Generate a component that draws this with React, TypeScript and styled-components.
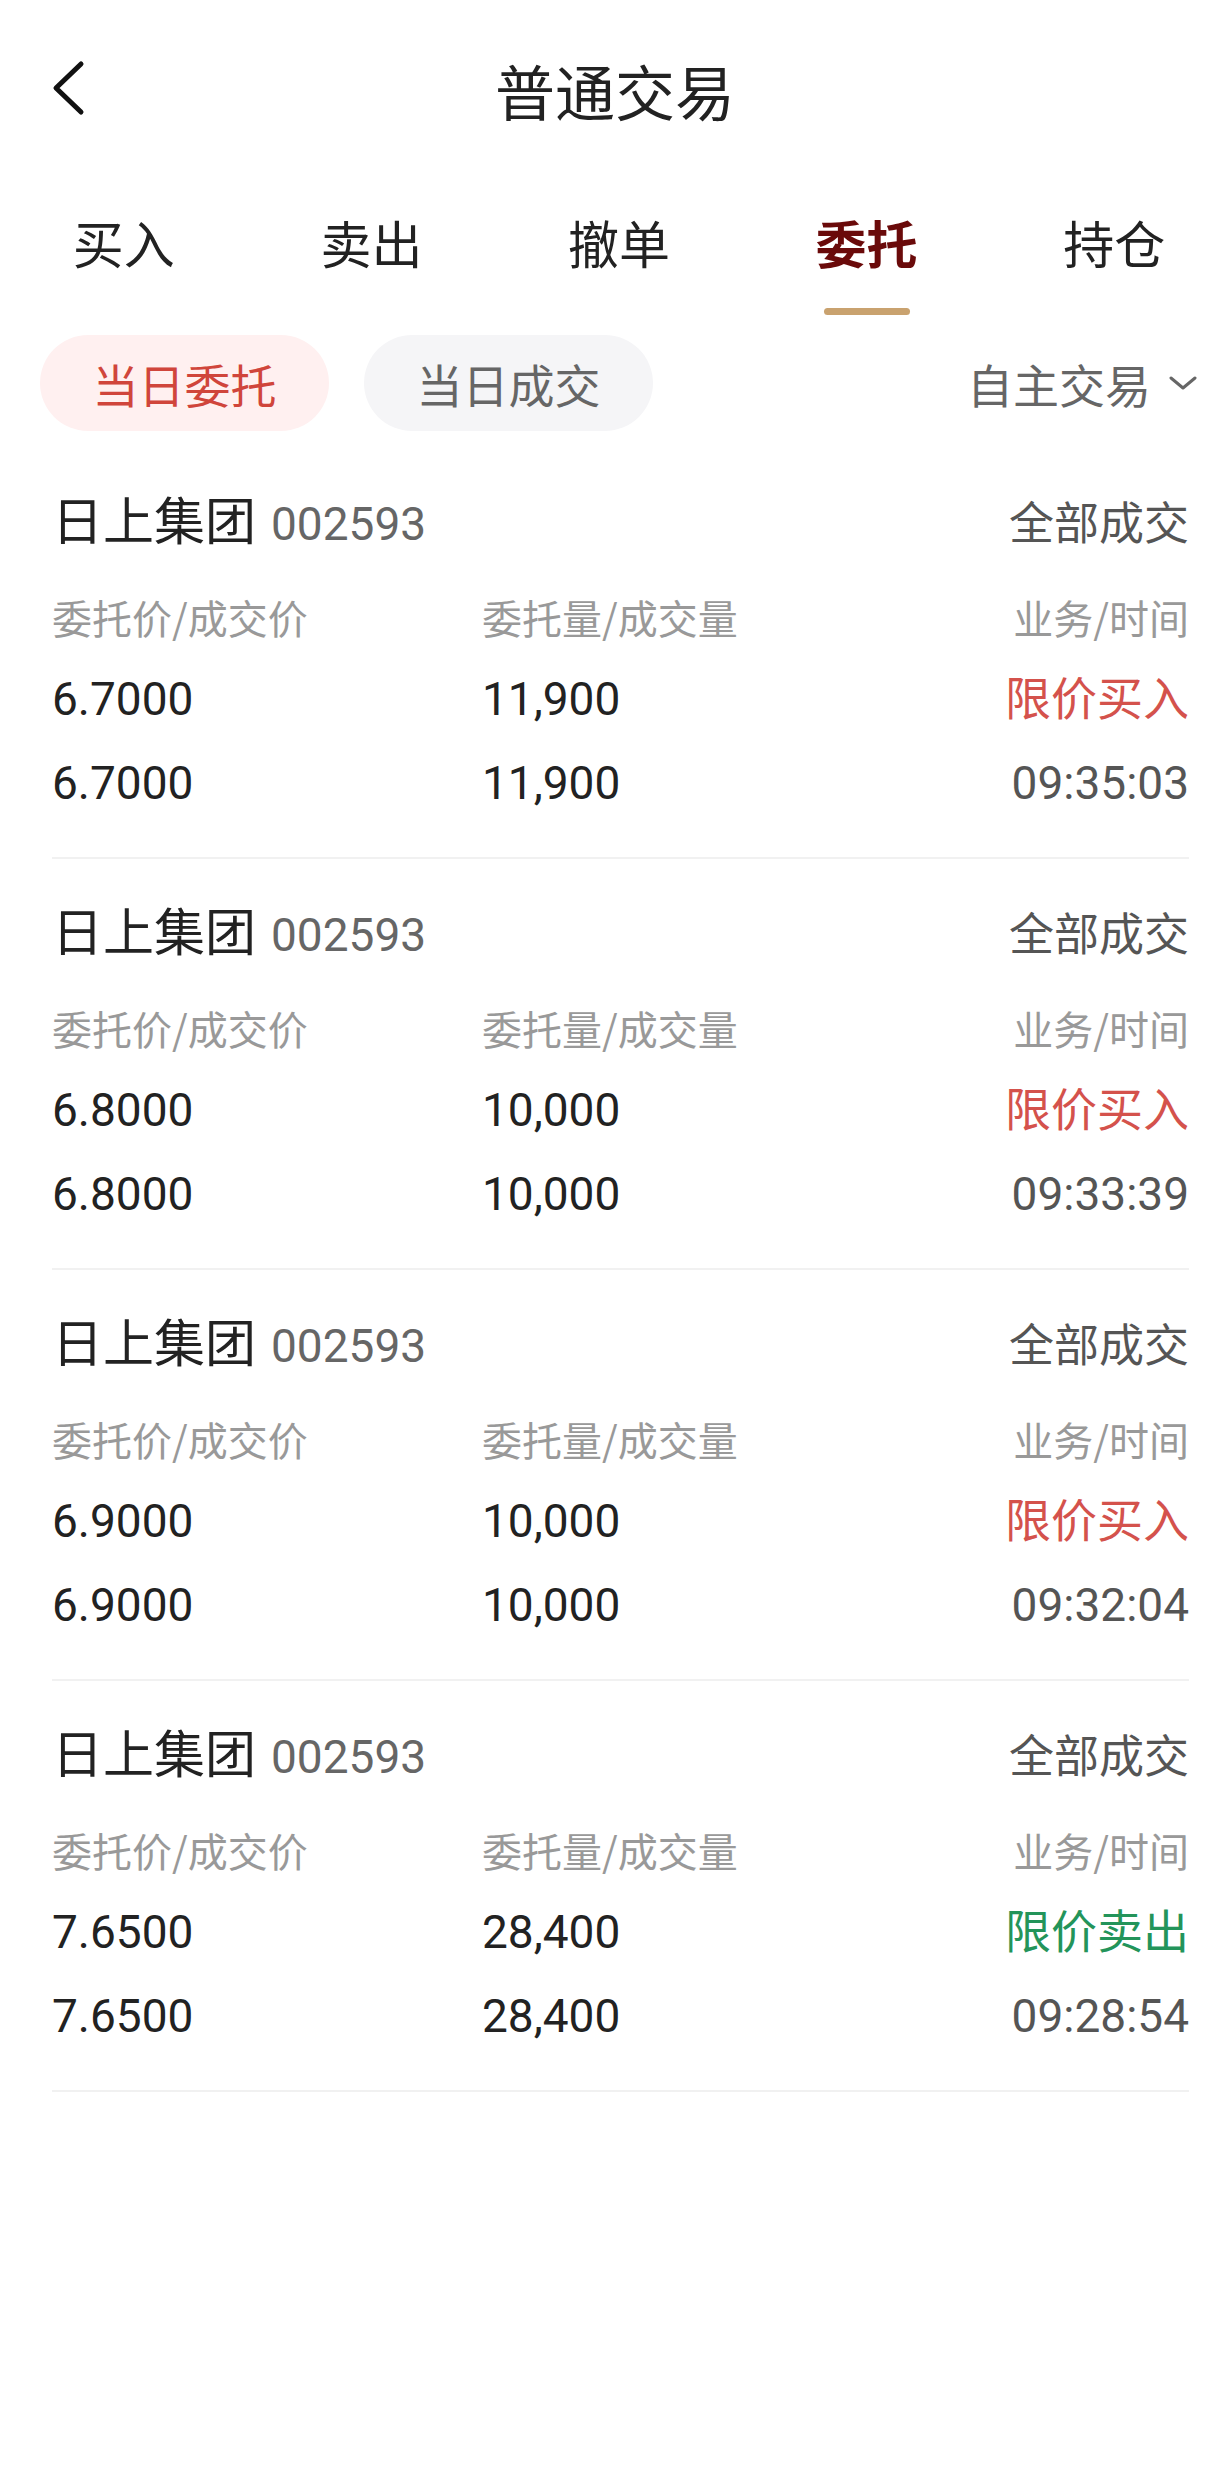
import React from "react";
import styled, { createGlobalStyle } from "styled-components";

const GlobalStyle = createGlobalStyle`
  html, body {
    margin: 0;
    padding: 0;
    background: #ffffff;
  }
  body {
    font-family: Roboto, "Noto Sans CJK SC", "Noto Sans", sans-serif;
    color: #222222;
  }
  * { box-sizing: border-box; }
`;

const Page = styled.div`
  width: 1230px;
  min-height: 2480px;
  background: #ffffff;
  font-family: Roboto, "Noto Sans CJK SC", sans-serif;
`;

const Header = styled.header`
  height: 180px;
  display: grid;
  grid-template-columns: 1fr auto 1fr;
  align-items: center;
`;

const BackButton = styled.button`
  justify-self: start;
  display: flex;
  align-items: center;
  margin: 0 0 4px 46px;
  padding: 0;
  border: none;
  background: transparent;
  width: 44px;
  height: 60px;
`;

const Title = styled.h1`
  margin: 0;
  font-size: 60px;
  line-height: 80px;
  font-weight: 400;
  color: #222222;
  font-family: "Noto Sans CJK SC", sans-serif;
`;

const Tabs = styled.nav`
  display: grid;
  grid-template-columns: repeat(5, 247.6px);
  overflow: hidden;
`;

const Tab = styled.div<{ $active?: boolean }>`
  display: flex;
  flex-direction: column;
  align-items: center;
  padding-top: 32px;
  font-family: "Noto Sans CJK SC", sans-serif;
  font-size: 51px;
  line-height: 60px;
  font-weight: ${(p) => (p.$active ? 700 : 400)};
  color: ${(p) => (p.$active ? "#6a0a0a" : "#222222")};
`;

const TabIndicator = styled.span<{ $active?: boolean }>`
  display: block;
  margin-top: 36px;
  width: 86px;
  height: 7px;
  border-radius: 4px;
  background: ${(p) => (p.$active ? "#c9a26f" : "transparent")};
`;

const FilterRow = styled.div`
  display: flex;
  align-items: center;
  gap: 35px;
  margin-top: 20px;
  padding: 0 33px 0 40px;
  height: 96px;
`;

const Chip = styled.div<{ $active?: boolean }>`
  width: 289px;
  height: 96px;
  border-radius: 48px;
  display: flex;
  align-items: center;
  justify-content: center;
  font-family: "Noto Sans CJK SC", sans-serif;
  font-size: 46px;
  background: ${(p) => (p.$active ? "#fff0f0" : "#f5f5f7")};
  color: ${(p) => (p.$active ? "#d0453b" : "#666666")};
`;

const Dropdown = styled.div`
  margin-left: auto;
  display: flex;
  align-items: center;
  gap: 18px;
  font-family: "Noto Sans CJK SC", sans-serif;
  font-size: 46px;
  color: #666666;
`;

const List = styled.div`
  margin-top: 17px;
  padding: 0 41px 0 52px;
`;

const Card = styled.div`
  padding: 40px 0 44px;
  border-bottom: 2px solid #f1f1f1;
`;

const CardHead = styled.div`
  display: flex;
  align-items: baseline;
  height: 60px;
  line-height: 60px;
`;

const StockName = styled.span`
  font-family: "Noto Sans CJK SC", sans-serif;
  font-size: 51px;
  color: #222222;
`;

const StockCode = styled.span`
  margin-left: 15px;
  font-family: Roboto, sans-serif;
  font-size: 46px;
  color: #666666;
`;

const Status = styled.span`
  margin-left: auto;
  font-family: "Noto Sans CJK SC", sans-serif;
  font-size: 45px;
  color: #555555;
`;

const Grid = styled.div`
  display: grid;
  grid-template-columns: 430px 1fr auto;
  margin-top: 43px;
`;

const Label = styled.div<{ $right?: boolean }>`
  font-family: "Noto Sans CJK SC", sans-serif;
  font-size: 40px;
  line-height: 52px;
  color: #999999;
  text-align: ${(p) => (p.$right ? "right" : "left")};
`;

const Value = styled.div<{ $right?: boolean; $color?: string; $gap: number }>`
  font-family: Roboto, "Noto Sans CJK SC", sans-serif;
  font-size: 46px;
  line-height: 60px;
  margin-top: ${(p) => p.$gap}px;
  color: ${(p) => p.$color || "#222222"};
  text-align: ${(p) => (p.$right ? "right" : "left")};
`;

type Order = {
  price: string;
  qty: string;
  action: string;
  side: "buy" | "sell";
  time: string;
};

const orders: Order[] = [
  { price: "6.7000", qty: "11,900", action: "限价买入", side: "buy", time: "09:35:03" },
  { price: "6.8000", qty: "10,000", action: "限价买入", side: "buy", time: "09:33:39" },
  { price: "6.9000", qty: "10,000", action: "限价买入", side: "buy", time: "09:32:04" },
  { price: "7.6500", qty: "28,400", action: "限价卖出", side: "sell", time: "09:28:54" },
];

const tabs = ["买入", "卖出", "撤单", "委托", "持仓"];

const BackIcon = () => (
  <svg width="44" height="60" viewBox="0 0 44 60">
    <path
      d="M35 6 L10 30 L35 54"
      fill="none"
      stroke="#111111"
      strokeWidth="5"
      strokeLinecap="round"
      strokeLinejoin="round"
    />
  </svg>
);

const ChevronDown = () => (
  <svg width="28" height="16" viewBox="0 0 28 16">
    <path
      d="M2 3 L14 13 L26 3"
      fill="none"
      stroke="#666666"
      strokeWidth="3"
      strokeLinecap="round"
      strokeLinejoin="round"
    />
  </svg>
);

export default function App() {
  return (
    <Page>
      <GlobalStyle />
      <Header>
        <BackButton aria-label="返回">
          <BackIcon />
        </BackButton>
        <Title>普通交易</Title>
        <div />
      </Header>
      <Tabs>
        {tabs.map((t) => (
          <Tab key={t} $active={t === "委托"}>
            {t}
            <TabIndicator $active={t === "委托"} />
          </Tab>
        ))}
      </Tabs>
      <FilterRow>
        <Chip $active>当日委托</Chip>
        <Chip>当日成交</Chip>
        <Dropdown>
          自主交易
          <ChevronDown />
        </Dropdown>
      </FilterRow>
      <List>
        {orders.map((o, i) => {
          const color = o.side === "buy" ? "#d4524c" : "#23945a";
          return (
            <Card key={i}>
              <CardHead>
                <StockName>日上集团</StockName>
                <StockCode>002593</StockCode>
                <Status>全部成交</Status>
              </CardHead>
              <Grid>
                <Label>委托价/成交价</Label>
                <Label>委托量/成交量</Label>
                <Label $right>业务/时间</Label>
                <Value $gap={26}>{o.price}</Value>
                <Value $gap={26}>{o.qty}</Value>
                <Value $gap={26} $right $color={color}>
                  {o.action}
                </Value>
                <Value $gap={24}>{o.price}</Value>
                <Value $gap={24}>{o.qty}</Value>
                <Value $gap={24} $right $color="#555555">
                  {o.time}
                </Value>
              </Grid>
            </Card>
          );
        })}
      </List>
    </Page>
  );
}
